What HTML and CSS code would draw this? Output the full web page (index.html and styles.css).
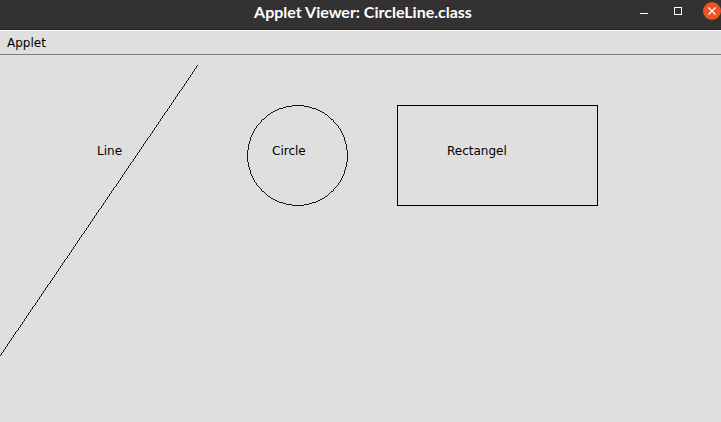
FILE: index.html
```html
<!DOCTYPE html>
<html lang="en">
<head>
<meta charset="utf-8">
<title>Applet Viewer: CircleLine.class</title>
<link rel="stylesheet" href="styles.css">
</head>
<body>
<header class="titlebar">
  <h1 class="title">Applet Viewer: CircleLine.class</h1>
  <div class="controls">
    <button class="control" type="button" aria-label="Minimize">
      <svg width="18" height="18" shape-rendering="crispEdges"><path d="M5 11h8v1H5z" fill="#fff"/></svg>
    </button>
    <button class="control" type="button" aria-label="Maximize">
      <svg width="18" height="18" shape-rendering="crispEdges"><path d="M5.500 5.500h7v7h-7z" fill="none" stroke="#fff"/></svg>
    </button>
    <button class="control close" type="button" aria-label="Close">
      <svg width="18" height="18"><path d="M5.500 5.500l7 7M12.500 5.500l-7 7" fill="none" stroke="#fff" stroke-width="1.400"/></svg>
    </button>
  </div>
</header>
<nav class="menubar">
  <button class="menu" type="button">Applet</button>
</nav>
<main class="applet">
  <svg class="canvas" shape-rendering="crispEdges">
    <g fill="none" stroke="#000">
      <path d="M198 10L0 301" stroke-width="0.9"/>
      <circle cx="297.500" cy="100.500" r="50" stroke-width="0.9"/>
      <rect x="397.500" y="50.500" width="200" height="100"/>
    </g>
    <text x="97" y="100">Line</text>
    <text x="272" y="100">Circle</text>
    <text x="447" y="100">Rectangel</text>
  </svg>
</main>
</body>
</html>
```
FILE: styles.css
```css
* {
  box-sizing: border-box;
}

body {
  display: flex;
  flex-direction: column;
  min-height: 100vh;
  margin: 0;
  overflow: hidden;
  background: #dfdfdf;
  color: #000;
  font: 12px/16px "DejaVu Sans", sans-serif;
}

button {
  padding: 0;
  border: 0;
  background: none;
  color: inherit;
  font: inherit;
}

.titlebar {
  display: grid;
  grid-template-columns: 1fr auto 1fr;
  height: 30px;
  padding-left: 5px;
  border-bottom: 1px solid #1f1e1e;
  background: #333132;
}

.title {
  grid-column: 2;
  margin: 0;
  color: #fff;
  font: bold 16px/24px Lato, sans-serif;
}

.controls {
  display: flex;
  justify-content: flex-end;
  align-items: flex-start;
  gap: 16px;
  padding-top: 2px;
}

.control {
  width: 18px;
  height: 18px;
}

.control svg {
  display: block;
}

.close {
  border-radius: 50%;
  background: #e95420;
}

.menubar {
  display: flex;
  align-items: center;
  height: 25px;
  padding: 0 7px;
  border-top: 1px solid #fff;
  border-bottom: 1px solid #808080;
}

.applet {
  display: flex;
  flex: 1;
}

.canvas {
  flex: 1;
}
```
